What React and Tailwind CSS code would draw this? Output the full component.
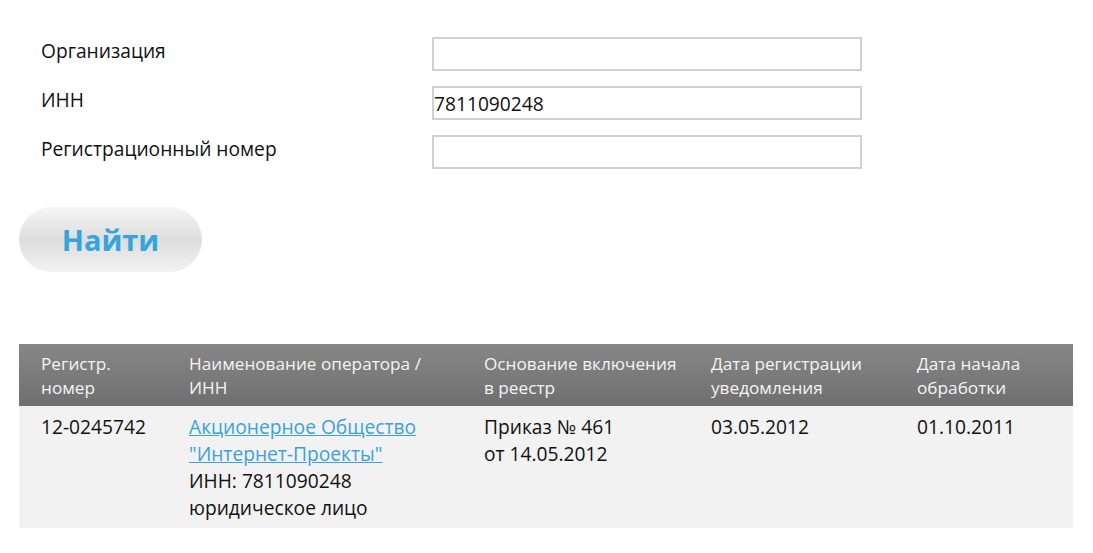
export default function App() {
  const fields = [
    { label: 'Организация', value: '' },
    { label: 'ИНН', value: '7811090248' },
    { label: 'Регистрационный номер', value: '' },
  ];

  const cols = [
    { w: 'w-[148px]', head: ['Регистр.', 'номер'] },
    { w: 'w-[295px]', head: ['Наименование оператора /', 'ИНН'] },
    { w: 'w-[227px]', head: ['Основание включения', 'в реестр'] },
    { w: 'w-[206px]', head: ['Дата регистрации', 'уведомления'] },
    { w: 'w-[178px]', head: ['Дата начала', 'обработки'] },
  ];

  return (
    <div className="min-h-[553px] bg-white text-[#111] text-[19.2px]" style={{ fontFamily: '"Open Sans", sans-serif' }}>
      {/* Search form */}
      <div className="pt-[37px] pl-[41px] flex flex-col gap-[15px]">
        {fields.map((f) => (
          <div key={f.label} className="flex items-start h-[34px]">
            <div className="w-[391px] leading-[28px]">{f.label}</div>
            <input
              readOnly
              value={f.value}
              className="w-[430px] h-[34px] border-2 border-[#d0d0d0] bg-white px-0 text-[19.2px] text-[#111] outline-none"
            />
          </div>
        ))}
      </div>

      <div className="pl-[19px] pt-[38px]">
        <button className="w-[183px] h-[65px] rounded-full bg-linear-to-b from-[#f6f6f6] via-[#dddddd] to-[#f2f2f2] text-[#35a5dd] text-[29px] font-bold">
          Найти
        </button>
      </div>

      {/* Results table */}
      <div className="pl-[19px] pt-[72px]">
        <table className="w-[1054px] border-collapse">
          <thead>
            <tr className="bg-linear-to-b from-[#878787] to-[#6f6f6f] text-[#f4f4f4] text-[17.2px] leading-[24px] text-left">
              {cols.map((c) => (
                <th key={c.head[0]} className={`${c.w} font-normal align-top pl-[22px] pr-2 pt-[8px] pb-[6px]`}>
                  {c.head[0]}
                  <br />
                  {c.head[1]}
                </th>
              ))}
            </tr>
          </thead>
          <tbody>
            <tr className="bg-[#f2f2f2] leading-[27px] align-top">
              <td className="pl-[22px] pt-[7px] pb-[7px]">12-0245742</td>
              <td className="pl-[22px] pt-[7px] pb-[7px]">
                <a href="#" className="text-[#3ba2dc] underline">
                  Акционерное Общество
                  <br />
                  "Интернет-Проекты"
                </a>
                <br />
                ИНН: 7811090248
                <br />
                юридическое лицо
              </td>
              <td className="pl-[22px] pt-[7px] pb-[7px]">
                Приказ № 461
                <br />
                от 14.05.2012
              </td>
              <td className="pl-[22px] pt-[7px] pb-[7px]">03.05.2012</td>
              <td className="pl-[22px] pt-[7px] pb-[7px]">01.10.2011</td>
            </tr>
          </tbody>
        </table>
      </div>
    </div>
  );
}
